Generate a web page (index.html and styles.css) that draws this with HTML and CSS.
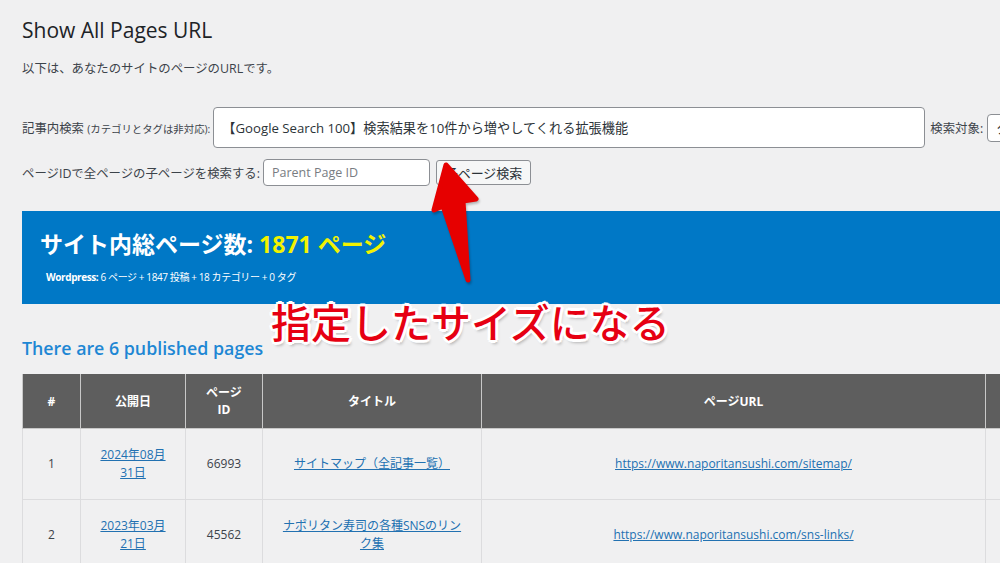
FILE: index.html
```html
<!DOCTYPE html>
<html lang="ja">
<head>
<meta charset="utf-8">
<title>Show All Pages URL</title>
<link rel="stylesheet" href="styles.css">
</head>
<body>
<div class="page">
  <h1 class="title">Show All Pages URL</h1>
  <p class="intro">以下は、あなたのサイトのページのURLです。</p>

  <div class="form-row row-search">
    <label class="lbl">記事内検索 <small>(カテゴリとタグは非対応):</small></label>
    <input class="field field-big" type="text" value="【Google Search 100】検索結果を10件から増やしてくれる拡張機能">
    <span class="lbl lbl-target">検索対象:</span>
    <div class="select">タイトル</div>
  </div>

  <div class="form-row row-child">
    <label class="lbl">ページIDで全ページの子ページを検索する:</label>
    <input class="field field-small" type="text" placeholder="Parent Page ID">
    <button class="btn" type="button">子ページ検索</button>
  </div>

  <div class="banner">
    <div class="banner-title">サイト内総ページ数: <span class="count">1871 ページ</span></div>
    <div class="banner-sub"><b>Wordpress:</b> 6 ページ + 1847 投稿 + 18 カテゴリー + 0 タグ</div>
  </div>

  <h2 class="sub-title">There are 6 published pages</h2>

  <table class="pages">
    <colgroup>
      <col class="c-num"><col class="c-date"><col class="c-id"><col class="c-title"><col class="c-url"><col class="c-extra">
    </colgroup>
    <thead>
      <tr>
        <th>#</th>
        <th>公開日</th>
        <th>ページ<br>ID</th>
        <th>タイトル</th>
        <th>ページURL</th>
        <th>編集</th>
      </tr>
    </thead>
    <tbody>
      <tr>
        <td>1</td>
        <td><a href="#">2024年08月31日</a></td>
        <td>66993</td>
        <td><a href="#">サイトマップ（全記事一覧）</a></td>
        <td><a href="#">https://www.naporitansushi.com/sitemap/</a></td>
        <td></td>
      </tr>
      <tr>
        <td>2</td>
        <td><a href="#">2023年03月21日</a></td>
        <td>45562</td>
        <td><a href="#">ナポリタン寿司の各種SNSのリンク集</a></td>
        <td><a href="#">https://www.naporitansushi.com/sns-links/</a></td>
        <td></td>
      </tr>
    </tbody>
  </table>
</div>

<svg class="arrow" width="1000" height="563" viewBox="0 0 1000 563" aria-hidden="true">
  <polygon points="446,165 476,199 463,201 468,280 443,206 434,210" fill="#e60000" stroke="#e60000" stroke-width="5" stroke-linejoin="round"/>
</svg>
<div class="note">指定したサイズになる</div>
</body>
</html>
```

FILE: styles.css
```css
html, body {
  margin: 0;
  padding: 0;
}
body {
  background: #f0f0f1;
  color: #3c434a;
  font-family: "Open Sans", "Noto Sans CJK JP", sans-serif;
  font-size: 12px;
  overflow: hidden;
  width: 1000px;
  height: 563px;
  position: relative;
}
.page {
  width: 1300px;
  padding: 16px 0 0 22px;
  box-sizing: border-box;
}
.title {
  margin: 0;
  font-size: 21px;
  font-weight: 400;
  line-height: 29px;
  color: #1d2327;
}
.intro {
  margin: 15px 0 0;
  line-height: 18px;
  font-size: 12.4px;
}
.form-row {
  display: flex;
  align-items: center;
}
.row-search {
  margin-top: 29px;
  height: 41px;
}
.row-child {
  margin-top: 11px;
  height: 27px;
}
.lbl {
  font-size: 12.4px;
  color: #3c434a;
  white-space: nowrap;
}
.lbl small {
  font-size: 10.4px;
}
.field {
  box-sizing: border-box;
  background: #fff;
  border: 1px solid #8c8f94;
  border-radius: 4px;
  font-family: inherit;
  color: #2c3338;
  margin: 0;
}
.field-big {
  width: 712px;
  height: 41px;
  margin-left: 3px;
  padding: 0 8px;
  font-size: 13.2px;
}
.lbl-target {
  margin-left: 5px;
}
.select {
  box-sizing: border-box;
  margin-left: 4px;
  width: 120px;
  height: 28px;
  background: #fff;
  border: 1px solid #8c8f94;
  border-radius: 4px;
  padding: 3px 8px;
  font-size: 13px;
  color: #2c3338;
}
.field-small {
  width: 167px;
  height: 27px;
  margin-left: 3px;
  padding: 0 8px;
  font-size: 12.5px;
}
.field-small::placeholder {
  color: #787c82;
}
.btn {
  box-sizing: border-box;
  margin-left: 6px;
  width: 95px;
  height: 25px;
  background: #f6f7f7;
  border: 1px solid #8c8f94;
  border-radius: 3px;
  font-family: inherit;
  font-size: 13px;
  color: #2c3338;
  padding: 0;
}
.banner {
  margin-top: 25px;
  height: 93px;
  box-sizing: border-box;
  background: #0078c6;
  color: #fff;
  padding: 19px 0 0 18px;
}
.banner-title {
  font-size: 23px;
  font-weight: 700;
  line-height: 28px;
}
.banner-title .count {
  color: #f2f200;
}
.banner-sub {
  margin-top: 10px;
  margin-left: 6px;
  font-size: 10px;
  letter-spacing: -0.4px;
  line-height: 18px;
}
.sub-title {
  margin: 32px 0 0;
  font-size: 17.8px;
  font-weight: 600;
  line-height: 24px;
  color: #1e87d4;
}
.pages {
  margin-top: 14px;
  border-collapse: collapse;
  table-layout: fixed;
  width: 1164px;
}
.c-num { width: 58px; }
.c-date { width: 105px; }
.c-id { width: 77px; }
.c-title { width: 219px; }
.c-url { width: 504px; }
.c-extra { width: 201px; }
.pages th {
  background: #5e5e5e;
  color: #fff;
  font-weight: 700;
  height: 54px;
  line-height: 17px;
  padding: 0 8px;
  border: 1px solid #c8c8c8;
  border-top: none;
  font-size: 12px;
}
.pages td {
  height: 70px;
  padding: 0 18px;
  text-align: center;
  line-height: 18px;
  border: 1px solid #dcdcde;
  font-size: 12px;
  color: #3c434a;
}
.pages a {
  color: #2271b1;
  text-decoration: underline;
}
.arrow {
  position: absolute;
  top: 0;
  left: 0;
  pointer-events: none;
  filter: drop-shadow(1px 2px 1px rgba(0,0,0,0.25));
}
.note {
  position: absolute;
  left: 271px;
  top: 296px;
  font-family: "Noto Sans CJK JP", sans-serif;
  font-size: 40px;
  font-weight: 500;
  line-height: 50px;
  color: #e60012;
  white-space: nowrap;
  text-shadow:
    2px 0 0 #fff, -2px 0 0 #fff, 0 2px 0 #fff, 0 -2px 0 #fff,
    2px 2px 0 #fff, -2px -2px 0 #fff, 2px -2px 0 #fff, -2px 2px 0 #fff,
    3px 0 0 #fff, -3px 0 0 #fff, 0 3px 0 #fff, 0 -3px 0 #fff,
    2px 4px 3px rgba(0,0,0,0.25);
}
```
